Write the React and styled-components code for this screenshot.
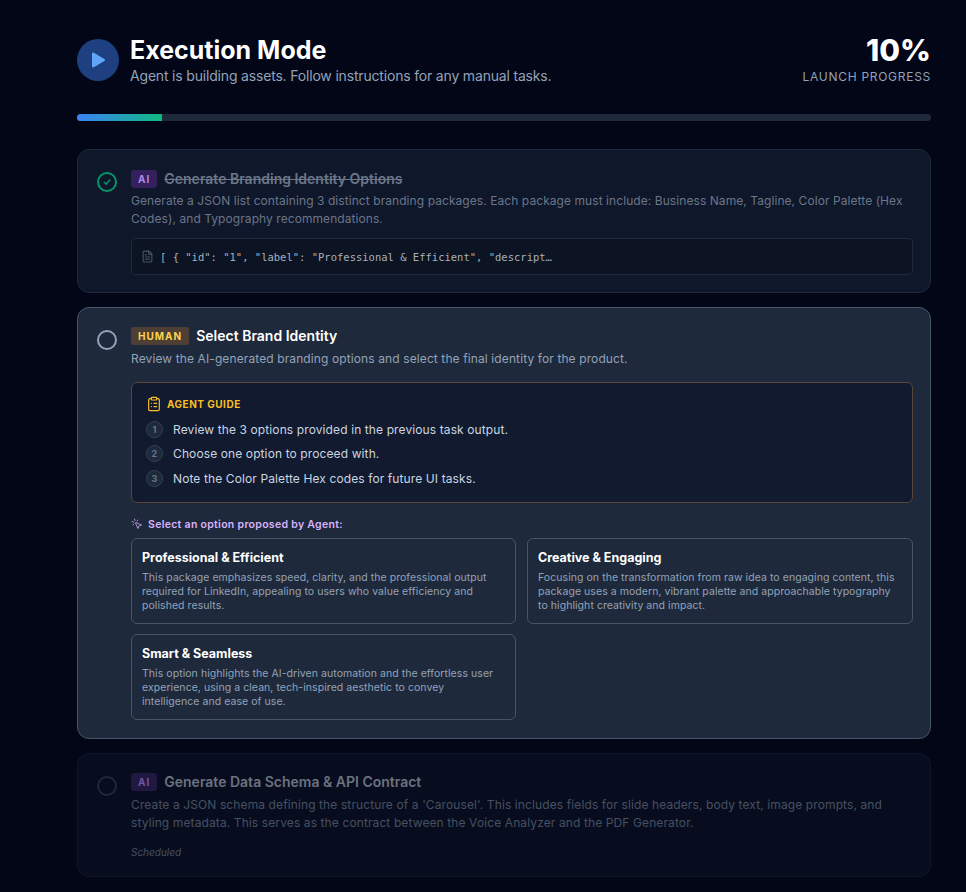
import styled, { createGlobalStyle } from "styled-components";
import { ClipboardList, FileText, MousePointerClick } from "lucide-react";

const GlobalStyle = createGlobalStyle`
  html, body { margin: 0; background: #020617; }
  body { font-family: Inter, "Liberation Sans", sans-serif; -webkit-font-smoothing: antialiased; }
`;

const Page = styled.div`
  width: 966px;
  height: 892px;
  overflow: hidden;
  box-sizing: border-box;
  padding: 32px 35px 0 77px;
`;

const Header = styled.header`
  display: flex;
  justify-content: space-between;
  align-items: flex-start;
`;

const TitleGroup = styled.div`
  display: flex;
  align-items: center;
  gap: 11px;
  padding-top: 2px;
`;

const PlayBadge = styled.div`
  width: 42px;
  height: 42px;
  border-radius: 50%;
  background: #1e4080;
  display: flex;
  align-items: center;
  justify-content: center;
  svg { display: block; }
`;

const Title = styled.h1`
  margin: 0;
  font-size: 25px;
  line-height: 32px;
  font-weight: 700;
  color: #fff;
`;

const Subtitle = styled.p`
  margin: 0;
  font-size: 14px;
  line-height: 20px;
  letter-spacing: -0.18px;
  color: #94a3b8;
`;

const ProgressInfo = styled.div`
  text-align: right;
`;

const Percent = styled.div`
  font-size: 30px;
  line-height: 36px;
  font-weight: 800;
  color: #fff;
`;

const PercentLabel = styled.div`
  font-size: 12px;
  line-height: 16px;
  letter-spacing: 0.72px;
  color: #94a3b8;
  margin-top: 1px;
`;

const Track = styled.div`
  height: 7px;
  margin: 28px 0 28px;
  border-radius: 4px;
  background: #1e293b;
  overflow: hidden;
`;

const Fill = styled.div`
  height: 100%;
  background: linear-gradient(90deg, #3b82f6, #10b981);
`;

const TaskList = styled.div`
  display: flex;
  flex-direction: column;
  gap: 14px;
`;

const Card = styled.section`
  box-sizing: border-box;
  display: flex;
  gap: 14px;
  padding: ${(p) => p.$padding};
  border-radius: 12px;
  border: 1px solid ${(p) => (p.$active ? "#475569" : p.$muted ? "#0e1728" : "#1e293b")};
  background: ${(p) => (p.$active ? "#1e293b" : p.$muted ? "#070d1e" : "#0f172a")};
`;

const StatusRing = styled.div`
  box-sizing: border-box;
  flex: none;
  width: 20px;
  height: 20px;
  margin-top: ${(p) => p.$top};
  border-radius: 50%;
  border: 2px solid ${(p) => p.$color};
  display: flex;
  align-items: center;
  justify-content: center;
`;

const Body = styled.div`
  flex: 1;
  min-width: 0;
`;

const TaskHead = styled.div`
  display: flex;
  align-items: center;
  gap: 7px;
`;

const Tag = styled.span`
  box-sizing: border-box;
  height: 18px;
  padding: 0 7px;
  border-radius: 3px;
  display: inline-flex;
  align-items: center;
  font-size: 10px;
  font-weight: 700;
  letter-spacing: 1px;
  background: ${(p) => (p.$human ? "#4d3f33" : p.$muted ? "#211842" : "#33205c")};
  color: ${(p) => (p.$human ? "#fcd34d" : p.$muted ? "#6f55a0" : "#b18be6")};
`;

const TaskTitle = styled.h3`
  margin: 0;
  font-size: 14px;
  line-height: 20px;
  font-weight: 600;
  color: ${(p) => p.$color};
  text-decoration: ${(p) => (p.$done ? "line-through" : "none")};
`;

const TaskText = styled.p`
  margin: ${(p) => p.$margin};
  font-size: 12px;
  line-height: 18px;
  letter-spacing: ${(p) => p.$track};
  color: ${(p) => p.$color};
`;

const OutputBox = styled.div`
  box-sizing: border-box;
  height: 37px;
  margin-top: 10px;
  padding: 0 9px;
  display: flex;
  align-items: center;
  gap: 6px;
  border-radius: 4px;
  border: 1px solid #1e293b;
  background: #0c1322;
  font-family: "DejaVu Sans Mono", "Liberation Mono", monospace;
  font-size: 10.5px;
  color: #a7b0be;
  white-space: pre;
`;

const GuideBox = styled.div`
  box-sizing: border-box;
  height: 121px;
  margin-top: 14px;
  padding: 12px 14px;
  border-radius: 6px;
  border: 1px solid #5a4536;
  background: #111a2e;
`;

const GuideHead = styled.div`
  display: flex;
  align-items: center;
  gap: 5px;
  height: 18px;
  font-size: 10px;
  font-weight: 700;
  letter-spacing: 0.5px;
  color: #fbbf24;
  margin-bottom: 7px;
`;

const Steps = styled.ol`
  list-style: none;
  margin: 0;
  padding: 0;
  display: flex;
  flex-direction: column;
  gap: 6.5px;
`;

const Step = styled.li`
  display: flex;
  align-items: center;
  gap: 10px;
  height: 18px;
  font-size: 12px;
  letter-spacing: 0.11px;
  color: #cbd5e1;
`;

const StepNumber = styled.span`
  box-sizing: border-box;
  width: 17px;
  height: 17px;
  border-radius: 50%;
  border: 1px solid #334155;
  background: #1e293b;
  color: #64748b;
  font-size: 9px;
  font-weight: 700;
  display: flex;
  align-items: center;
  justify-content: center;
`;

const OptionPrompt = styled.div`
  display: flex;
  align-items: center;
  gap: 5px;
  height: 16px;
  margin: 13px 0 6px;
  font-size: 10.5px;
  font-weight: 600;
  letter-spacing: 0.3px;
  color: #d8b4fe;
`;

const OptionGrid = styled.div`
  display: grid;
  grid-template-columns: 385px 1fr;
  gap: 10px 11px;
`;

const Option = styled.div`
  box-sizing: border-box;
  height: 86px;
  padding: 10px 12px 10px 10px;
  border-radius: 6px;
  border: 1px solid #475569;
  background: #1e293b;
`;

const OptionTitle = styled.div`
  font-size: 12.5px;
  line-height: 17px;
  font-weight: 700;
  color: #fff;
  margin-bottom: 5px;
`;

const OptionText = styled.p`
  margin: 0;
  font-size: 10.5px;
  line-height: 14px;
  letter-spacing: 0.06px;
  color: #94a3b8;
`;

const Scheduled = styled.div`
  margin-top: 13px;
  font-size: 10px;
  line-height: 14px;
  font-style: italic;
  color: #465062;
`;

const options = [
  {
    title: "Professional & Efficient",
    text: "This package emphasizes speed, clarity, and the professional output required for LinkedIn, appealing to users who value efficiency and polished results.",
  },
  {
    title: "Creative & Engaging",
    text: "Focusing on the transformation from raw idea to engaging content, this package uses a modern, vibrant palette and approachable typography to highlight creativity and impact.",
  },
  {
    title: "Smart & Seamless",
    text: "This option highlights the AI-driven automation and the effortless user experience, using a clean, tech-inspired aesthetic to convey intelligence and ease of use.",
  },
];

const steps = [
  "Review the 3 options provided in the previous task output.",
  "Choose one option to proceed with.",
  "Note the Color Palette Hex codes for future UI tasks.",
];

export default function App() {
  return (
    <Page>
      <GlobalStyle />
      <Header>
        <TitleGroup>
          <PlayBadge>
            <svg width="18" height="18" viewBox="0 0 18 18">
              <path d="M3 2.800c0-.9 1-1.500 1.800-1l10.600 6.200c.8.4.8 1.500 0 2L4.800 16.200c-.8.5-1.800-.1-1.800-1z" fill="#60a5fa" />
            </svg>
          </PlayBadge>
          <div>
            <Title>Execution Mode</Title>
            <Subtitle>Agent is building assets. Follow instructions for any manual tasks.</Subtitle>
          </div>
        </TitleGroup>
        <ProgressInfo>
          <Percent>10%</Percent>
          <PercentLabel>LAUNCH PROGRESS</PercentLabel>
        </ProgressInfo>
      </Header>

      <Track>
        <Fill style={{ width: "10%" }} />
      </Track>

      <TaskList>
        <Card $padding="19px 17px 17px 19px">
          <StatusRing $top="3px" $color="#059669">
            <svg width="10" height="10" viewBox="0 0 10 10">
              <path d="M2.200 5.200l2 1.900 3.600-4" fill="none" stroke="#059669" strokeWidth="1.500" strokeLinecap="round" strokeLinejoin="round" />
            </svg>
          </StatusRing>
          <Body>
            <TaskHead>
              <Tag>AI</Tag>
              <TaskTitle $done $color="#6b7688">Generate Branding Identity Options</TaskTitle>
            </TaskHead>
            <TaskText $margin="3px 0 0" $track="0.07px" $color="#6b7688">
              Generate a JSON list containing 3 distinct branding packages. Each package must include: Business Name, Tagline, Color Palette (Hex Codes), and Typography recommendations.
            </TaskText>
            <OutputBox>
              <FileText size={13} color="#475569" />
              {'[ { "id": "1", "label": "Professional & Efficient", "descript…'}
            </OutputBox>
          </Body>
        </Card>

        <Card $active $padding="18px 17px 18px 19px">
          <StatusRing $top="4px" $color="#94a3b8" />
          <Body>
            <TaskHead>
              <Tag $human>HUMAN</Tag>
              <TaskTitle $color="#fff">Select Brand Identity</TaskTitle>
            </TaskHead>
            <TaskText $margin="4px 0 0" $track="0.11px" $color="#94a3b8">
              Review the AI-generated branding options and select the final identity for the product.
            </TaskText>
            <GuideBox>
              <GuideHead>
                <ClipboardList size={16} strokeWidth={1.750} />
                AGENT GUIDE
              </GuideHead>
              <Steps>
                {steps.map((step, i) => (
                  <Step key={step}>
                    <StepNumber>{i + 1}</StepNumber>
                    {step}
                  </Step>
                ))}
              </Steps>
            </GuideBox>
            <OptionPrompt>
              <MousePointerClick size={12} strokeWidth={1.500} />
              Select an option proposed by Agent:
            </OptionPrompt>
            <OptionGrid>
              {options.map((option) => (
                <Option key={option.title}>
                  <OptionTitle>{option.title}</OptionTitle>
                  <OptionText>{option.text}</OptionText>
                </Option>
              ))}
            </OptionGrid>
          </Body>
        </Card>

        <Card $muted $padding="18px 17px 17px 19px">
          <StatusRing $top="4px" $color="#1e293b" />
          <Body>
            <TaskHead>
              <Tag $muted>AI</Tag>
              <TaskTitle $color="#6b7280">Generate Data Schema &amp; API Contract</TaskTitle>
            </TaskHead>
            <TaskText $margin="4px 0 0" $track="0.11px" $color="#465062">
              Create a JSON schema defining the structure of a 'Carousel'. This includes fields for slide headers, body text, image prompts, and styling metadata. This serves as the contract between the Voice Analyzer and the PDF Generator.
            </TaskText>
            <Scheduled>Scheduled</Scheduled>
          </Body>
        </Card>
      </TaskList>
    </Page>
  );
}
